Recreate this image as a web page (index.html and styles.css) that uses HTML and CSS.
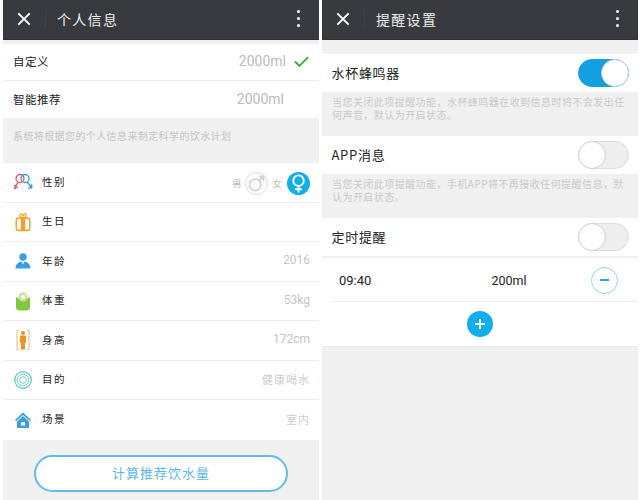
FILE: index.html
```html
<!DOCTYPE html>
<html lang="zh">
<head>
<meta charset="utf-8">
<title>设置</title>
<link rel="stylesheet" href="styles.css">
</head>
<body>
<div class="screen">
  <section class="panel">
    <header class="bar">
      <svg class="close" viewBox="0 0 16 16"><path d="M1.500 1.500l13 13M14.500 1.500l-13 13"/></svg>
      <span class="bar-sep"></span>
      <h1 class="bar-title">个人信息</h1>
      <span class="dots"><i></i><i></i><i></i></span>
    </header>
    <div class="plan-gap"></div>
    <div class="plan-row plan-first">
      <span class="plan-label">自定义</span>
      <span class="plan-value">2000ml</span>
      <svg class="check" viewBox="0 0 16 12"><path d="M.8 6l5 4.800L15.200 1.200"/></svg>
    </div>
    <div class="plan-row plan-second">
      <span class="plan-label">智能推荐</span>
      <span class="plan-value">2000ml</span>
    </div>
    <p class="plan-note">系统将根据您的个人信息来制定科学的饮水计划</p>

    <div class="info-row">
      <svg class="info-icon" viewBox="0 0 20 20" fill="none" stroke-width="1.300">
        <circle cx="7" cy="6.500" r="4" stroke="#e2535b"/><path d="M5.200 10.200L1.500 16M1.200 13l3.500 3M1 16.500l2-.5" stroke="#e2535b"/>
        <circle cx="12" cy="6.500" r="4" stroke="#2f9fc9"/><path d="M14 10l4.500 5.500M18.700 12.300v3.500h-3.500" stroke="#2f9fc9"/>
      </svg>
      <span class="info-label">性别</span>
      <span class="gender">
        <span class="gender-text">男</span>
        <span class="gender-off"><svg viewBox="0 0 24 24" fill="none"><circle cx="10.500" cy="13.500" r="6.500"/><path d="M15.500 8.500L20 4M15 4h5v5"/></svg></span>
        <span class="gender-text">女</span>
        <span class="gender-on"><svg viewBox="0 0 24 24" fill="none"><circle cx="12" cy="9" r="5.500"/><path d="M12 14.500V21.500M8.500 18h7"/></svg></span>
      </span>
    </div>
    <div class="info-row">
      <svg class="info-icon" viewBox="0 0 20 20"><path d="M7 4C7 .8 9.500 1.500 10 4.500 10.500 1.500 13-.2 13 4 13 5.200 11.500 5.500 10 5.500S7 5.200 7 4z" fill="none" stroke="#f2a024" stroke-width="1.200"/><rect x="3.200" y="6" width="13.600" height="12.500" rx="2.500" fill="#fff" stroke="#f2a024" stroke-width="1.400"/><path d="M7.800 6h4.400v13H7.800z" fill="#f2a024"/></svg>
      <span class="info-label">生日</span>
    </div>
    <div class="info-row">
      <svg class="info-icon" viewBox="0 0 20 20"><circle cx="10" cy="6" r="3.700" fill="#3a9fe0"/><path d="M2.500 17.500c0-4 2.500-6.500 6-7l1.500 3 1.500-3c3.500.5 6 3 6 7z" fill="#3a9fe0"/></svg>
      <span class="info-label">年龄</span>
      <span class="info-value">2016</span>
    </div>
    <div class="info-row">
      <svg class="info-icon" viewBox="0 0 20 20"><path d="M3 6l7 4 7-4v10a3.500 3.500 0 0 1-3.500 3.500h-7A3.500 3.500 0 0 1 3 16z" fill="#86c540"/><circle cx="10" cy="6" r="4.500" fill="#c9e39a"/><circle cx="10" cy="6" r="2" fill="#fff"/></svg>
      <span class="info-label">体重</span>
      <span class="info-value">53kg</span>
    </div>
    <div class="info-row">
      <svg class="info-icon" viewBox="0 0 20 20"><path d="M6 .5H4v19h2M14 .5h2v19h-2" fill="none" stroke="#f3b875"/><circle cx="10" cy="3" r="2" fill="#ee9322"/><path d="M7 5.500h6V13h-1v6.500H8V13H7z" fill="#ee9322"/></svg>
      <span class="info-label">身高</span>
      <span class="info-value">172cm</span>
    </div>
    <div class="info-row">
      <svg class="info-icon" viewBox="0 0 20 20" fill="none" stroke="#6fd0c4"><circle cx="10" cy="10" r="8.300" stroke-width="1.400"/><circle cx="10" cy="10" r="5.800"/><circle cx="10" cy="10" r="3.300"/></svg>
      <span class="info-label">目的</span>
      <span class="info-value info-cjk">健康喝水</span>
    </div>
    <div class="info-row info-last">
      <svg class="info-icon" viewBox="0 0 20 20"><path d="M10 2.500L2 10l1.200 1L10 5l6.800 6 1.200-1z" fill="#3a9fe0"/><path d="M4 11.500L10 6l6 5.500V18H4z" fill="#3a9fe0"/><rect x="8" y="12" width="4" height="3.500" fill="#fff"/></svg>
      <span class="info-label">场景</span>
      <span class="info-value info-cjk">室内</span>
    </div>
    <div class="action">
      <button class="action-btn">计算推荐饮水量</button>
    </div>
  </section>

  <section class="panel">
    <header class="bar">
      <svg class="close" viewBox="0 0 16 16"><path d="M1.500 1.500l13 13M14.500 1.500l-13 13"/></svg>
      <span class="bar-sep"></span>
      <h1 class="bar-title">提醒设置</h1>
      <span class="dots"><i></i><i></i><i></i></span>
    </header>
    <div class="remind-gap"></div>
    <div class="toggle-row">
      <span class="toggle-label">水杯蜂鸣器</span>
      <span class="switch switch-on"><i></i></span>
    </div>
    <p class="remind-note">当您关闭此项提醒功能，水杯蜂鸣器在收到信息时将不会发出任何声音，默认为开启状态。</p>
    <div class="toggle-row">
      <span class="toggle-label">APP消息</span>
      <span class="switch"><i></i></span>
    </div>
    <p class="remind-note">当您关闭此项提醒功能，手机APP将不再接收任何提醒信息，默认为开启状态。</p>
    <div class="toggle-row">
      <span class="toggle-label">定时提醒</span>
      <span class="switch"><i></i></span>
    </div>
    <div class="timer-row">
      <span class="timer-time">09:40</span>
      <span class="timer-amount">200ml</span>
      <span class="minus"><i></i></span>
    </div>
    <div class="add-row"><span class="plus"></span></div>
  </section>
</div>
</body>
</html>
```
FILE: styles.css
```css
* { box-sizing: border-box; }
html, body { margin: 0; padding: 0; background: #fff; }
body { font-family: "Noto Sans CJK SC", "Noto Sans", sans-serif; }
.screen { display: flex; gap: 3px; width: 640px; height: 500px; padding: 0 2px 0 3px; overflow: hidden; }
.panel { width: 316px; height: 500px; background: #f0f0f0; display: flex; flex-direction: column; overflow: hidden; }

.bar { height: 40px; flex: none; background: #393a3f; display: flex; align-items: center; padding: 0 19px 2px 14px; border-bottom: 1px solid #2f3034; }
.close { width: 14px; height: 14px; fill: none; stroke: #fff; stroke-width: 2.200; }
.bar-sep { width: 1px; height: 20px; background: #424348; margin-left: 14px; }
.bar-title { margin: 0 0 0 11px; font-size: 14px; font-weight: 400; color: #eee; letter-spacing: 1.300px; }
.dots { margin-left: auto; display: flex; flex-direction: column; gap: 4px; }
.dots i { width: 3px; height: 3px; border-radius: 50%; background: #fff; }

.plan-gap { height: 4px; flex: none; }
.plan-row { background: #fff; display: flex; align-items: center; flex: none; padding: 0 0 2px 10px; color: #222; font-size: 11.500px; letter-spacing: .5px; }
.plan-first { height: 37px; border-bottom: 1px solid #ebebeb; }
.plan-second { height: 37px; }
.plan-value { margin-left: auto; font-family: Roboto, sans-serif; font-size: 14px; color: #bbb; letter-spacing: 0; }
.plan-first .plan-value { margin-right: 8px; }
.plan-second .plan-value { margin-right: 35px; }
.check { width: 15px; height: 11px; margin-right: 10px; fill: none; stroke: #3cab3c; stroke-width: 2; }
.plan-note { height: 45px; margin: 0; flex: none; padding: 11px 10px 0; font-size: 10px; letter-spacing: .4px; line-height: 14px; color: #c4c4c4; }

.info-row { height: 39.500px; flex: none; background: #fff; border-bottom: 1px solid #ebebeb; display: flex; align-items: center; padding: 0 9px 0 10px; }
.info-last { border-bottom: none; }
.info-icon { width: 20px; height: 20px; flex: none; }
.info-label { margin: 0 0 2px 9px; font-size: 10.500px; letter-spacing: 1.500px; color: #222; }
.info-value { margin: 0 0 2px auto; font-family: Roboto, sans-serif; font-size: 12px; color: #c4c4c4; }
.info-cjk { font-family: "Noto Sans CJK SC", sans-serif; font-size: 11px; letter-spacing: 1px; color: #ccc; }

.gender { margin-left: auto; display: flex; align-items: center; padding-top: 2px; }
.gender-text { font-size: 9.500px; color: #bbb; }
.gender-off, .gender-on { width: 23px; height: 23px; border-radius: 50%; display: flex; }
.gender-off { margin: 0 4px 0 4px; border: 1px solid #ddd; }
.gender-off svg { width: 21px; height: 21px; stroke: #d4d4d4; stroke-width: 2.200; }
.gender-on { margin-left: 5px; background: #12aee8; }
.gender-on svg { width: 23px; height: 23px; stroke: #fff; stroke-width: 2; }

.action { flex: 1; padding-top: 15.500px; display: flex; justify-content: center; }
.action-btn { width: 254px; height: 37px; border: 2px solid #62bce8; border-radius: 19px; background: #fff; font: inherit; font-size: 13px; letter-spacing: 1px; color: #5ab8e6; padding: 0 0 2px; }

.remind-gap { height: 14px; flex: none; }
.toggle-row { height: 38px; flex: none; background: #fff; display: flex; align-items: center; padding: 0 9px 0 9.500px; }
.toggle-label { font-size: 13px; letter-spacing: .7px; color: #222; margin-bottom: 2px; }
.remind-note { height: 44px; flex: none; margin: 0; padding: 3px 8px 0 10px; font-size: 10px; line-height: 13px; letter-spacing: .45px; color: #c9c9c9; }
.switch { margin-left: auto; width: 51px; height: 28px; border-radius: 14px; background: #eee; border: 1px solid #ddd; display: flex; }
.switch i { width: 28px; height: 28px; margin: -1px; border-radius: 50%; background: #fff; border: 1px solid #ccc; }
.switch-on { background: #12a0e0; border-color: #12a0e0; justify-content: flex-end; }

.timer-row { height: 44px; flex: none; margin-top: 2px; background: #fff; display: flex; align-items: center; position: relative; padding: 0 20px 0 17px; font-family: Roboto, sans-serif; font-size: 13px; color: #222; }
.timer-row::after { content: ""; position: absolute; left: 10px; right: 0; bottom: 0; height: 1px; background: #ebebeb; }
.timer-amount { margin-left: 120px; font-size: 12.500px; }
.minus { margin-left: auto; width: 27px; height: 27px; border-radius: 50%; border: 1px solid #8fd2ee; display: flex; align-items: center; justify-content: center; }
.minus i { width: 9px; height: 1.500px; background: #23a8e0; }

.add-row { height: 45px; flex: none; background: #fff; border-bottom: 1px solid #ebebeb; display: flex; align-items: center; justify-content: center; }
.plus { width: 26px; height: 26px; border-radius: 50%; background: linear-gradient(#fff, #fff) center / 10px 2px no-repeat, linear-gradient(#fff, #fff) center / 2px 10px no-repeat, #12aee8; }
```
